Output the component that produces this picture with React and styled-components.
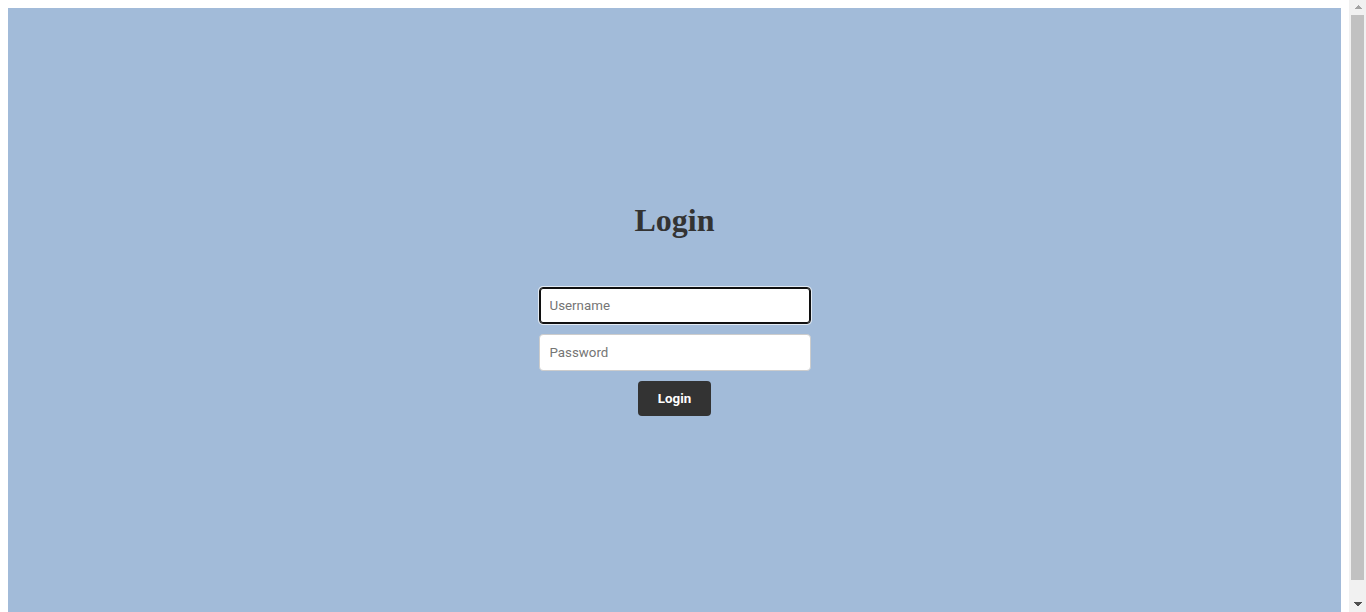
import React from "react";
import styled, { createGlobalStyle } from "styled-components";

const Global = createGlobalStyle`
  html, body {
    margin: 0;
    padding: 0;
    overflow: hidden;
    background: #ffffff;
    font-family: "Liberation Serif", "Times New Roman", serif;
  }
  * { box-sizing: border-box; }
`;

const Screen = styled.div`
  display: flex;
  width: 100vw;
  height: 100vh;
  overflow: hidden;
`;

const Viewport = styled.div`
  flex: 1;
  min-width: 0;
  padding: 8px 8px 0 8px;
  overflow: hidden;
`;

const Page = styled.div`
  height: 100vh;
  background: #a2bbd9;
  display: flex;
  flex-direction: column;
  align-items: center;
  justify-content: center;
  padding-bottom: 10px;
`;

const Title = styled.h1`
  margin: 0 0 48px;
  font-family: "Liberation Serif", "Times New Roman", serif;
  font-size: 32px;
  font-weight: bold;
  color: #333333;
`;

const Form = styled.form`
  display: flex;
  flex-direction: column;
  align-items: center;
  gap: 10px;
`;

const Input = styled.input`
  width: 272px;
  height: 37px;
  padding: 0 10px;
  border: 1px solid ${(p) => (p.$focused ? "#101010" : "#cccccc")};
  border-radius: 4px;
  background: #ffffff;
  font-family: Roboto, "Liberation Sans", Arial, sans-serif;
  font-size: 13.33px;
  color: #333;
  outline: none;
  box-shadow: ${(p) =>
    p.$focused ? "inset 0 0 0 1px #101010, 0 0 0 1px rgba(255,255,255,0.7)" : "none"};
  &::placeholder {
    color: #757575;
  }
`;

const Button = styled.button`
  width: 73px;
  height: 35px;
  border: none;
  border-radius: 4px;
  background: #333333;
  color: #ffffff;
  font-family: Roboto, "Liberation Sans", Arial, sans-serif;
  font-size: 13.33px;
  font-weight: bold;
  cursor: pointer;
`;

const Scrollbar = styled.div`
  width: 17px;
  flex: none;
  background: #f1f1f1;
  display: flex;
  flex-direction: column;
`;

const ScrollButton = styled.div`
  height: ${(p) => (p.$up ? "15px" : "17px")};
  flex: none;
  display: flex;
  align-items: center;
  justify-content: center;
  padding-top: ${(p) => (p.$up ? "0" : "1px")};
`;

const Arrow = styled.span`
  width: 8px;
  height: 4px;
  margin-top: ${(p) => (p.$up ? "-2px" : "0")};
  background: ${(p) =>
    p.$up
      ? "conic-gradient(from 135deg at 50% 0, #a3a3a3 0 90deg, transparent 0)"
      : "conic-gradient(from -45deg at 50% 100%, #505050 0 90deg, transparent 0)"};
`;

const Thumb = styled.div`
  height: 565px;
  flex: none;
  margin: 0 2px;
  background: #c1c1c1;
`;

const Track = styled.div`
  flex: 1;
`;

export default function App() {
  return (
    <>
      <Global />
      <Screen>
        <Viewport>
          <Page>
            <Title>Login</Title>
            <Form onSubmit={(e) => e.preventDefault()}>
              <Input $focused type="text" placeholder="Username" />
              <Input type="password" placeholder="Password" />
              <Button type="submit">Login</Button>
            </Form>
          </Page>
        </Viewport>
        <Scrollbar>
          <ScrollButton $up>
            <Arrow $up />
          </ScrollButton>
          <Thumb />
          <Track />
          <ScrollButton>
            <Arrow />
          </ScrollButton>
        </Scrollbar>
      </Screen>
    </>
  );
}
